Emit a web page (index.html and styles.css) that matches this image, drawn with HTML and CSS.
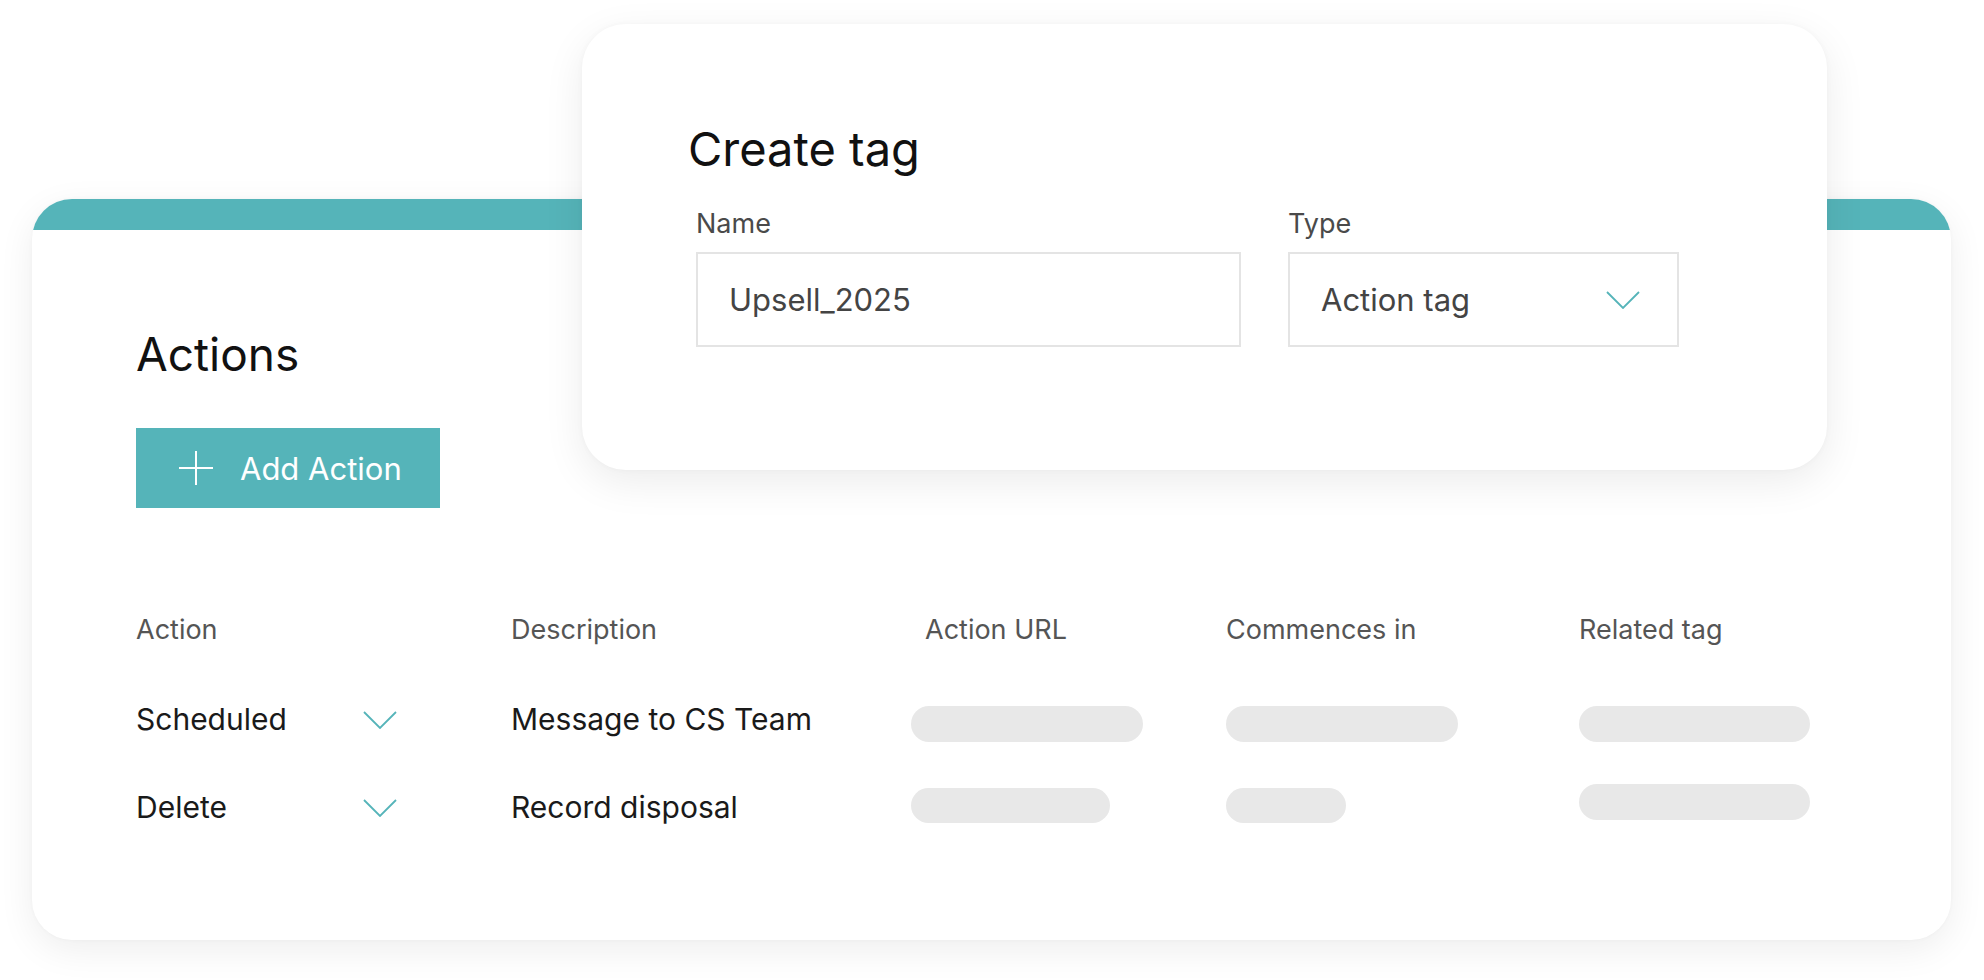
FILE: index.html
```html
<!DOCTYPE html>
<html lang="en">
<head>
<meta charset="utf-8">
<title>Actions</title>
<link rel="stylesheet" href="styles.css">
</head>
<body>
<div class="stage">
  <section class="card">
    <div class="card-band"></div>
    <div class="card-body">
      <h1 class="title">Actions</h1>
      <button class="add-btn" type="button">
        <svg class="plus" width="36" height="36" viewBox="0 0 36 36" aria-hidden="true"><path d="M18 1V35M1 18H35" stroke="#fff" stroke-width="2" fill="none"/></svg>
        <span>Add Action</span>
      </button>
      <div class="table">
        <div class="th">Action</div>
        <div class="th">Description</div>
        <div class="th th-url">Action URL</div>
        <div class="th">Commences in</div>
        <div class="th">Related tag</div>

        <div class="td td-action">Scheduled
          <svg class="chev" width="34" height="18" viewBox="0 0 34 18" aria-hidden="true"><path d="M1 1L17 17L33 1" stroke="#55b4b9" stroke-width="1.8" fill="none"/></svg>
        </div>
        <div class="td">Message to CS Team</div>
        <div class="td"><span class="bar bar-r1" style="width:232px"></span></div>
        <div class="td"><span class="bar bar-r1" style="width:232px"></span></div>
        <div class="td"><span class="bar bar-r1" style="width:231px"></span></div>

        <div class="td td-action">Delete
          <svg class="chev" width="34" height="18" viewBox="0 0 34 18" aria-hidden="true"><path d="M1 1L17 17L33 1" stroke="#55b4b9" stroke-width="1.8" fill="none"/></svg>
        </div>
        <div class="td">Record disposal</div>
        <div class="td"><span class="bar bar-r2" style="width:199px"></span></div>
        <div class="td"><span class="bar bar-r2" style="width:120px"></span></div>
        <div class="td"><span class="bar bar-r2b" style="width:231px"></span></div>
      </div>
    </div>
  </section>

  <div class="modal">
    <h2 class="modal-title">Create tag</h2>
    <div class="fields">
      <div class="field field-name">
        <label class="label">Name</label>
        <div class="input">Upsell_2025</div>
      </div>
      <div class="field field-type">
        <label class="label">Type</label>
        <div class="input select">
          <span>Action tag</span>
          <svg class="chev" width="34" height="18" viewBox="0 0 34 18" aria-hidden="true"><path d="M1 1L17 17L33 1" stroke="#55b4b9" stroke-width="1.8" fill="none"/></svg>
        </div>
      </div>
    </div>
  </div>
</div>
</body>
</html>
```

FILE: styles.css
```css
* { box-sizing: border-box; }
html, body {
  margin: 0;
  padding: 0;
  background: #ffffff;
}
body {
  width: 1984px;
  height: 980px;
  overflow: hidden;
  font-family: "Inter", "Noto Sans", "Liberation Sans", sans-serif;
  color: #111;
}
.stage {
  position: relative;
  width: 1984px;
  height: 980px;
  padding: 199px 33px 0 32px;
}

/* main card */
.card {
  height: 741px;
  background: #fff;
  border-radius: 40px;
  overflow: hidden;
  box-shadow: 0 10px 36px rgba(0, 0, 0, 0.07), 0 0 4px rgba(0, 0, 0, 0.03);
  display: flex;
  flex-direction: column;
}
.card-band {
  height: 31px;
  background: #55b4b9;
  flex: none;
}
.card-body {
  padding: 101px 0 0 104px;
}
.title {
  margin: 0;
  font-size: 46px;
  line-height: 46px;
  font-weight: 400;
  color: #111;
}
.add-btn {
  margin-top: 51px;
  width: 304px;
  height: 80px;
  background: #55b4b9;
  border: 0;
  border-radius: 0;
  padding: 0 0 0 42px;
  display: flex;
  align-items: center;
  gap: 26px;
  color: #fff;
  font-family: inherit;
  font-size: 31px;
  font-weight: 400;
  cursor: pointer;
}
.plus { flex: none; }

/* table */
.table {
  margin-top: 108px;
  display: grid;
  grid-template-columns: 375px 400px 315px 353px 1fr;
  grid-template-rows: auto 36px 36px;
  row-gap: 52px;
}
.th {
  font-size: 27px;
  line-height: 28px;
  color: #555;
  font-weight: 400;
  height: 28px;
  margin-bottom: 5px;
}
.th-url { padding-left: 14px; }
.td {
  font-size: 30px;
  line-height: 36px;
  color: #1a1a1a;
  height: 36px;
  display: flex;
  align-items: flex-start;
  white-space: nowrap;
}
.td-action { position: relative; }
.td-action .chev {
  position: absolute;
  left: 227px;
  top: 10px;
}
.bar {
  display: block;
  height: 36px;
  border-radius: 18px;
  background: #e8e8e8;
}
.bar-r1 { margin-top: 5px; }
.bar-r2 { margin-top: -1px; height: 35px; }
.bar-r2b { margin-top: -5px; }

/* modal overlay */
.modal {
  position: absolute;
  left: 582px;
  top: 24px;
  width: 1245px;
  height: 446px;
  background: #fff;
  border-radius: 44px;
  box-shadow: 0 12px 40px rgba(0, 0, 0, 0.08), 0 0 6px rgba(0, 0, 0, 0.03);
  padding: 102px 0 0 106px;
}
.modal-title {
  margin: 0;
  font-size: 47px;
  line-height: 46px;
  font-weight: 400;
  color: #111;
}
.fields {
  margin-top: 39px;
  display: flex;
  gap: 47px;
  padding-left: 8px;
}
.field {
  display: flex;
  flex-direction: column;
  gap: 15px;
}
.field-name { width: 545px; }
.field-type { width: 391px; }
.label {
  font-size: 27px;
  line-height: 26px;
  color: #4a4a4a;
}
.input {
  height: 95px;
  border: 2px solid #e4e4e4;
  padding: 0 0 0 31px;
  display: flex;
  align-items: center;
  font-size: 31px;
  color: #444;
}
.select {
  justify-content: space-between;
  padding-right: 37px;
}
.select .chev { flex: none; }
```
